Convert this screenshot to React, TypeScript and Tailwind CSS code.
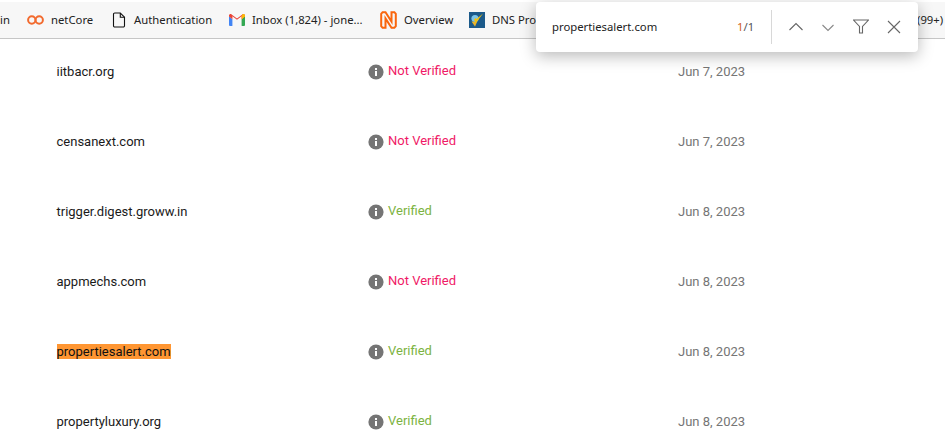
import React from 'react';

interface DomainRow {
  domain: string;
  verified: boolean;
  date: string;
  highlighted?: boolean;
}

const rows: DomainRow[] = [
  { domain: 'iitbacr.org', verified: false, date: 'Jun 7, 2023' },
  { domain: 'censanext.com', verified: false, date: 'Jun 7, 2023' },
  { domain: 'trigger.digest.groww.in', verified: true, date: 'Jun 8, 2023' },
  { domain: 'appmechs.com', verified: false, date: 'Jun 8, 2023' },
  { domain: 'propertiesalert.com', verified: true, date: 'Jun 8, 2023', highlighted: true },
  { domain: 'propertyluxury.org', verified: true, date: 'Jun 8, 2023' },
];

const NetCoreIcon = () => (
  <svg width="17" height="10" viewBox="0 0 17 10" fill="none" stroke="#f26a2e" strokeWidth="2" className="shrink-0">
    <circle cx="4.8" cy="5" r="3.7" />
    <circle cx="12.2" cy="5" r="3.7" />
  </svg>
);

const DocIcon = () => (
  <svg width="15" height="16" viewBox="0 0 15 16" fill="none" stroke="#111" strokeWidth="1.1" className="shrink-0">
    <path d="M1.5 2.2a1.2 1.2 0 0 1 1.2-1.2h5.6l4.2 4.2v8.6a1.2 1.2 0 0 1-1.2 1.2H2.7a1.2 1.2 0 0 1-1.2-1.2z" />
    <path d="M8.3 1v4.2h4.2" />
  </svg>
);

const GmailIcon = () => (
  <svg width="16" height="12" viewBox="0 0 16 12" fill="none" className="shrink-0">
    <path d="M0 2.2V11a1 1 0 0 0 1 1h2.4V5.2z" fill="#4285f4" />
    <path d="M12.6 5.2V12H15a1 1 0 0 0 1-1V2.2z" fill="#34a853" />
    <path d="M0 1.6C0 .3 1.5-.4 2.6.4L8 4.4l5.4-4c1.1-.8 2.6-.1 2.6 1.2v.9l-3.4 2.7V2.3L8 5.8 3.4 2.3v2.9L0 2.5z" fill="#ea4335" />
    <path d="M12.6 2.3v2.9L16 2.5v-.9c0-1.3-1.5-2-2.6-1.2z" fill="#fbbc04" />
  </svg>
);

const NIcon = () => (
  <svg width="17" height="18" viewBox="0 0 17 18" fill="none" stroke="#f9660d" strokeWidth="2" strokeLinejoin="miter" className="shrink-0">
    <path d="M5.5 1.2H2.6L1.2 2.8v12.4l1.4 1.6h2.9V7.5l6 9.3h2.9l1.4-1.6V2.8l-1.4-1.6h-2.9v9.3L5.5 1.2z" />
  </svg>
);

const DnsIcon = () => (
  <svg width="16" height="16" viewBox="0 0 16 16" fill="none" className="shrink-0">
    <rect width="16" height="16" fill="#1c5a8a" />
    <circle cx="6" cy="6.5" r="3.6" fill="#7cc4e8" />
    <path d="M2.5 9.5l3.5 5 2-4.5z" fill="#e9b52c" />
    <path d="M5 8l2 3 7-9.5-6.5 5.5-1.2-1z" fill="#f4c20d" />
  </svg>
);

const InfoIcon = () => (
  <svg width="16" height="16" viewBox="0 0 16 16" className="shrink-0">
    <circle cx="8" cy="8" r="7.6" fill="#757575" />
    <rect x="7" y="7" width="2" height="5" fill="#fff" />
    <rect x="7" y="4" width="2" height="2" fill="#fff" />
  </svg>
);

const Bookmark = ({ icon, label, className }: { icon: React.ReactNode; label: string; className: string }) => (
  <div className={`flex items-center shrink-0 whitespace-nowrap ${className}`}>
    {icon}
    <span className="ml-[7px]">{label}</span>
  </div>
);

export default function App() {
  return (
    <div className="relative h-[431px] w-[945px] overflow-hidden bg-white">
      <div className="relative z-10 flex h-[39px] items-center overflow-hidden border-t-2 border-b border-t-white border-b-[#c6c6c6] bg-[#f7f7f7] font-['Noto_Sans',sans-serif] text-[11.3px] text-[#222]">
        <span className="w-[27px] shrink-0">in</span>
        <Bookmark icon={<NetCoreIcon />} label="netCore" className="w-[85px]" />
        <Bookmark icon={<DocIcon />} label="Authentication" className="w-[117px]" />
        <Bookmark icon={<GmailIcon />} label="Inbox (1,824) - jone..." className="w-[151px]" />
        <Bookmark icon={<NIcon />} label="Overview" className="w-[89px]" />
        <Bookmark icon={<DnsIcon />} label="DNS Pro" className="w-[67px] overflow-hidden" />
        <span className="absolute left-[917px]">(99+)</span>
      </div>

      <div className="-mt-[2px] font-['Roboto',sans-serif] text-[13px]">
        {rows.map((row) => (
          <div key={row.domain} className="grid h-[70px] grid-cols-[311.5px_310px_1fr] items-center pl-[56.5px]">
            <div>
              <span className={row.highlighted ? 'bg-[#ff9632] text-[#111]' : 'text-[#1a1a1a]'}>{row.domain}</span>
            </div>
            <div className="flex items-center gap-1">
              <InfoIcon />
              <span className={`-mt-[2px] ${row.verified ? 'text-[#7cb342]' : 'text-[#f01a66]'}`}>
                {row.verified ? 'Verified' : 'Not Verified'}
              </span>
            </div>
            <div className="text-[#757575]">{row.date}</div>
          </div>
        ))}
      </div>

      <div className="absolute left-[536px] top-[2px] z-20 flex h-[50px] w-[382px] items-center rounded-[4px] bg-white font-['Noto_Sans',sans-serif] text-[11.3px] shadow-[0_4px_16px_rgba(0,0,0,0.28)]">
        <span className="ml-4 w-[185px] text-[#222]">propertiesalert.com</span>
        <span className="w-[34px] text-[#555]">
          <span className="text-[#d0611f]">1</span>/1
        </span>
        <div className="h-[34px] w-px bg-[#d8d8d8]" />
        <div className="ml-4 flex items-center gap-4 text-[#666]">
          <svg width="16" height="16" viewBox="0 0 16 16" fill="none" stroke="currentColor" strokeWidth="1.1">
            <path d="M1.5 11L8 4.5 14.5 11" />
          </svg>
          <svg width="16" height="16" viewBox="0 0 16 16" fill="none" stroke="#888" strokeWidth="1.1">
            <path d="M2.5 6L8 11.5 13.5 6" />
          </svg>
          <svg width="16" height="16" viewBox="0 0 16 16" fill="none" stroke="currentColor" strokeWidth="1.1" className="ml-px">
            <path d="M.5 1h15l-6 6.5V14h-3V7.5z" />
          </svg>
          <svg width="16" height="16" viewBox="0 0 16 16" fill="none" stroke="currentColor" strokeWidth="1.1" className="ml-px">
            <path d="M2 2l12 12M14 2L2 14" />
          </svg>
        </div>
      </div>
    </div>
  );
}
